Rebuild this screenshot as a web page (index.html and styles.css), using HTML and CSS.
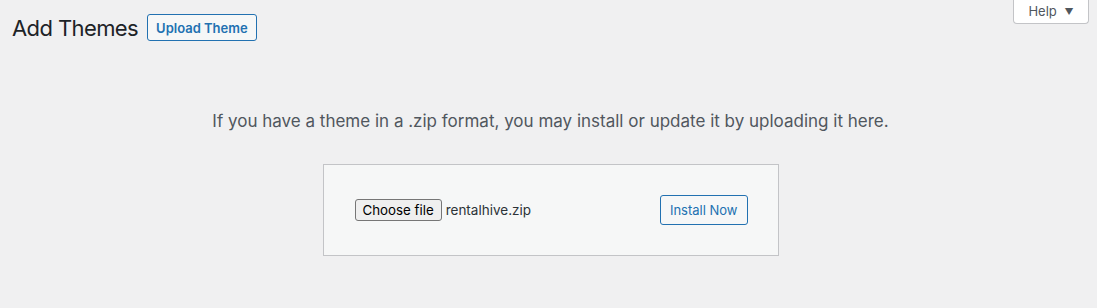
FILE: index.html
```html
<!DOCTYPE html>
<html lang="en">

<head>
	<meta charset="UTF-8" />
	<meta name="viewport" content="width=device-width, initial-scale=1.0" />
	<title>Add Themes</title>
	<link rel="stylesheet" href="styles.css">
</head>

<body>
	<div class="wrap">
		<!-- header -->
		<div class="top">
			<div class="heading">
				<h1>Add Themes</h1>
				<button class="title-action">Upload Theme</button>
			</div>
			<button class="help-link">Help <span class="arrow">&#9660;</span></button>
		</div>

		<!-- upload -->
		<div class="upload-theme">
			<p class="install-help">If you have a theme in a .zip format, you may install or update it by uploading it here.</p>
			<form class="upload-form">
				<div class="file-field">
					<button type="button" class="file-btn">Choose file</button>
					<span class="file-name">rentalhive.zip</span>
				</div>
				<button type="button" class="install-btn">Install Now</button>
			</form>
		</div>
	</div>
</body>

</html>
```
FILE: styles.css
```css
body {
	margin: 0;
	background: #f0f0f1;
	color: #3c434a;
	font-family: Inter, "Liberation Sans", sans-serif;
	font-size: 13px;
}

.wrap {
	padding: 0 8px 0 12px;
}

/* header */
.top {
	display: flex;
	justify-content: space-between;
	align-items: flex-start;
}

.heading {
	display: flex;
	align-items: center;
	gap: 9px;
	padding-top: 14px;
}

h1 {
	margin: 0;
	font-size: 22px;
	font-weight: 400;
	letter-spacing: -0.6px;
	line-height: 26px;
	color: #1d2327;
}

.title-action {
	height: 27px;
	padding: 0 8px;
	border: 1px solid #2271b1;
	border-radius: 3px;
	background: #f6f7f7;
	color: #2271b1;
	font-family: inherit;
	font-size: 13px;
	font-weight: 600;
}

.help-link {
	width: 76px;
	height: 25px;
	margin-top: -1px;
	padding: 0;
	border: 1px solid #c3c4c7;
	border-top: none;
	border-radius: 0 0 4px 4px;
	background: #fff;
	color: #50575e;
	font-family: inherit;
	font-size: 13px;
}

.help-link .arrow {
	margin-left: 4px;
	font-size: 9px;
	vertical-align: 1px;
}

/* upload */
.install-help {
	margin: 68px 0 31px;
	text-align: center;
	font-size: 17px;
	line-height: 24px;
	color: #50575e;
}

.upload-form {
	display: flex;
	justify-content: space-between;
	align-items: center;
	width: 394px;
	margin: 0 auto;
	padding: 30px;
	border: 1px solid #c3c4c7;
	background: #f6f7f7;
}

.file-field {
	display: flex;
	align-items: center;
	gap: 4px;
	margin-left: 1px;
}

.file-btn {
	height: 22px;
	padding: 0 7px;
	border: 1px solid #767676;
	border-radius: 3px;
	background: #efefef;
	color: #000;
	font-family: inherit;
	font-size: 13.3px;
}

.file-name {
	font-size: 13.5px;
	color: #2c3338;
}

.install-btn {
	height: 30px;
	padding: 0 9px 1px;
	border: 1px solid #2271b1;
	border-radius: 3px;
	background: #f6f7f7;
	color: #2271b1;
	font-family: inherit;
	font-size: 13px;
}
```
